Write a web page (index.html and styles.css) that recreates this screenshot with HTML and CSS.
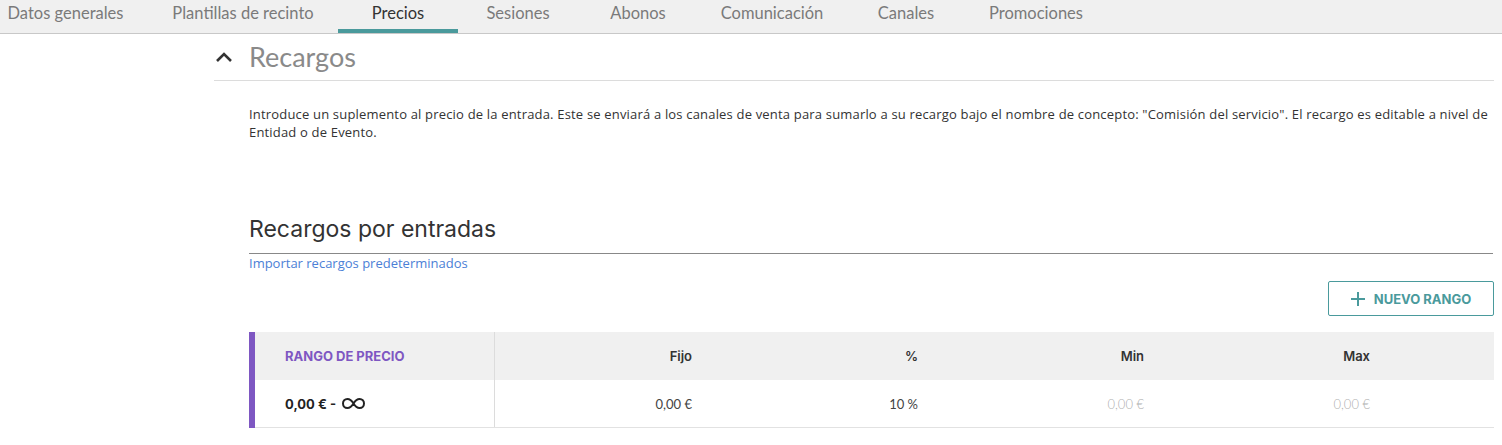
FILE: index.html
```html
<!DOCTYPE html>
<html lang="es">
<head>
<meta charset="utf-8">
<title>Precios - Recargos</title>
<link rel="stylesheet" href="styles.css">
</head>
<body>
<nav class="tabbar">
  <div class="tabs">
    <a class="tab">Datos generales</a>
    <a class="tab">Plantillas de recinto</a>
    <a class="tab active">Precios</a>
    <a class="tab">Sesiones</a>
    <a class="tab">Abonos</a>
    <a class="tab">Comunicación</a>
    <a class="tab">Canales</a>
    <a class="tab">Promociones</a>
  </div>
</nav>
<main class="page">
  <header class="section-head">
    <svg class="chevron" width="18" height="12" viewBox="0 0 18 12"><path d="M2 10 L9 3 L16 10" fill="none" stroke="#333" stroke-width="2.6"/></svg>
    <h1 class="section-title">Recargos</h1>
  </header>
  <div class="content">
    <p class="intro">Introduce un suplemento al precio de la entrada. Este se enviará a los canales de venta para sumarlo a su recargo bajo el nombre de concepto: "Comisión del servicio". El recargo es editable a nivel de Entidad o de Evento.</p>
    <h2 class="sub-title">Recargos por entradas</h2>
    <a class="link">Importar recargos predeterminados</a>
    <div class="actions">
      <button class="btn-outline">
        <svg width="14" height="14" viewBox="0 0 14 14"><path d="M7 0 V14 M0 7 H14" stroke="#4a9a9c" stroke-width="2"/></svg>
        <span>NUEVO RANGO</span>
      </button>
    </div>
    <div class="table">
      <div class="row head">
        <div class="cell first range-head">RANGO DE PRECIO</div>
        <div class="cell num">Fijo</div>
        <div class="cell num">%</div>
        <div class="cell num">Min</div>
        <div class="cell num">Max</div>
        <div class="cell"></div>
      </div>
      <div class="row body">
        <div class="cell first range">0,00 € - <svg class="inf" width="25" height="13" viewBox="0 0 25 13"><path d="M12.5 6.5 C10.5 3.2 8.6 2 6.4 2 C3.8 2 2 3.9 2 6.5 C2 9.1 3.8 11 6.4 11 C8.6 11 10.5 9.8 12.5 6.5 C14.5 3.2 16.4 2 18.6 2 C21.2 2 23 3.9 23 6.5 C23 9.1 21.2 11 18.6 11 C16.4 11 14.5 9.8 12.5 6.5 Z" fill="none" stroke="#222" stroke-width="2"/></svg></div>
        <div class="cell num">0,00 €</div>
        <div class="cell num">10 %</div>
        <div class="cell num muted">0,00 €</div>
        <div class="cell num muted">0,00 €</div>
        <div class="cell"></div>
      </div>
    </div>
  </div>
</main>
</body>
</html>
```
FILE: styles.css
```css
* { box-sizing: border-box; }
body {
  margin: 0;
  background: #fff;
  font-family: "Lato", "Open Sans", sans-serif;
  color: #333;
  width: 1502px;
  overflow: hidden;
}
.tabbar {
  background: #f0f0f0;
  border-bottom: 1px solid #c8c8c8;
  height: 34px;
  overflow: hidden;
}
.tabs {
  display: flex;
  margin-left: -17px;
  height: 33px;
}
.tab {
  display: flex;
  align-items: center;
  justify-content: center;
  height: 33px;
  padding-bottom: 3px;
  font-size: 16.5px;
  color: #7a7a7a;
  white-space: nowrap;
  flex: none;
  border-bottom: 4px solid transparent;
}
.tab:nth-child(1) { width: 165px; }
.tab:nth-child(2) { width: 190px; }
.tab:nth-child(3) { width: 120px; }
.tab:nth-child(4) { width: 120px; }
.tab:nth-child(5) { width: 120px; }
.tab:nth-child(6) { width: 148px; }
.tab:nth-child(7) { width: 120px; }
.tab:nth-child(8) { width: 140px; }
.tab.active {
  color: #333;
  border-bottom-color: #4a9a9c;
}
.page {
  padding: 0 8px 0 214px;
}
.section-head {
  display: flex;
  align-items: center;
  height: 47px;
  border-bottom: 1px solid #dcdcdc;
  padding-bottom: 1px;
}
.chevron { margin: 0 16px 0 1px; }
.section-title {
  margin: 0;
  font-size: 27px;
  font-weight: 400;
  color: #8a8a8a;
}
.content {
  padding-left: 35px;
  display: flex;
  flex-direction: column;
}
.intro {
  margin: 24px 0 0;
  font-family: "Open Sans", sans-serif;
  font-size: 13px;
  line-height: 18px;
  letter-spacing: 0.18px;
  color: #333;
}
.sub-title {
  margin: 73px 0 0;
  font-family: "Inter", sans-serif;
  font-weight: 400;
  font-size: 23px;
  line-height: 30px;
  color: #333;
  padding-bottom: 9px;
  border-bottom: 1px solid #888;
  margin-right: 1px;
}
.link {
  font-family: "Open Sans", sans-serif;
  font-size: 13px;
  line-height: 18px;
  color: #4b80d6;
  align-self: flex-start;
}
.actions {
  display: flex;
  justify-content: flex-end;
  margin-top: 9px;
}
.btn-outline {
  display: flex;
  align-items: center;
  justify-content: center;
  gap: 9px;
  width: 166px;
  height: 35px;
  border: 1px solid #4a9a9c;
  border-radius: 2px;
  background: #fff;
  color: #4a9a9c;
  font-family: "Inter", sans-serif;
  font-weight: 700;
  font-size: 13px;
  padding: 0;
}
.table {
  margin-top: 16px;
  border-left: 6px solid #7e57c2;
}
.row {
  display: grid;
  grid-template-columns: 240px 226px 226px 226px 226px 1fr;
}
.row.head { background: #f0f0f0; height: 48px; }
.row.body { height: 48px; border-bottom: 1px solid #e2e2e2; }
.cell {
  display: flex;
  align-items: center;
  justify-content: flex-end;
  padding-right: 29px;
  font-size: 14px;
}
.cell.first {
  justify-content: flex-start;
  padding-left: 30px;
  border-right: 1px solid #dcdcdc;
}
.head .cell.num { font-family: "Inter", sans-serif; font-weight: 600; font-size: 13px; color: #333; }
.range-head {
  font-family: "Inter", sans-serif;
  font-weight: 700;
  font-size: 13px;
  color: #7e57c2;
}
.range {
  font-family: "Inter", sans-serif;
  font-weight: 700;
  font-size: 13px;
  color: #222;
  gap: 4px;
}
.body .cell.num { font-size: 13px; color: #444; }
.body .cell.muted { color: #b0b0b0; font-weight: 300; }
.inf { margin-left: 1px; }
```
